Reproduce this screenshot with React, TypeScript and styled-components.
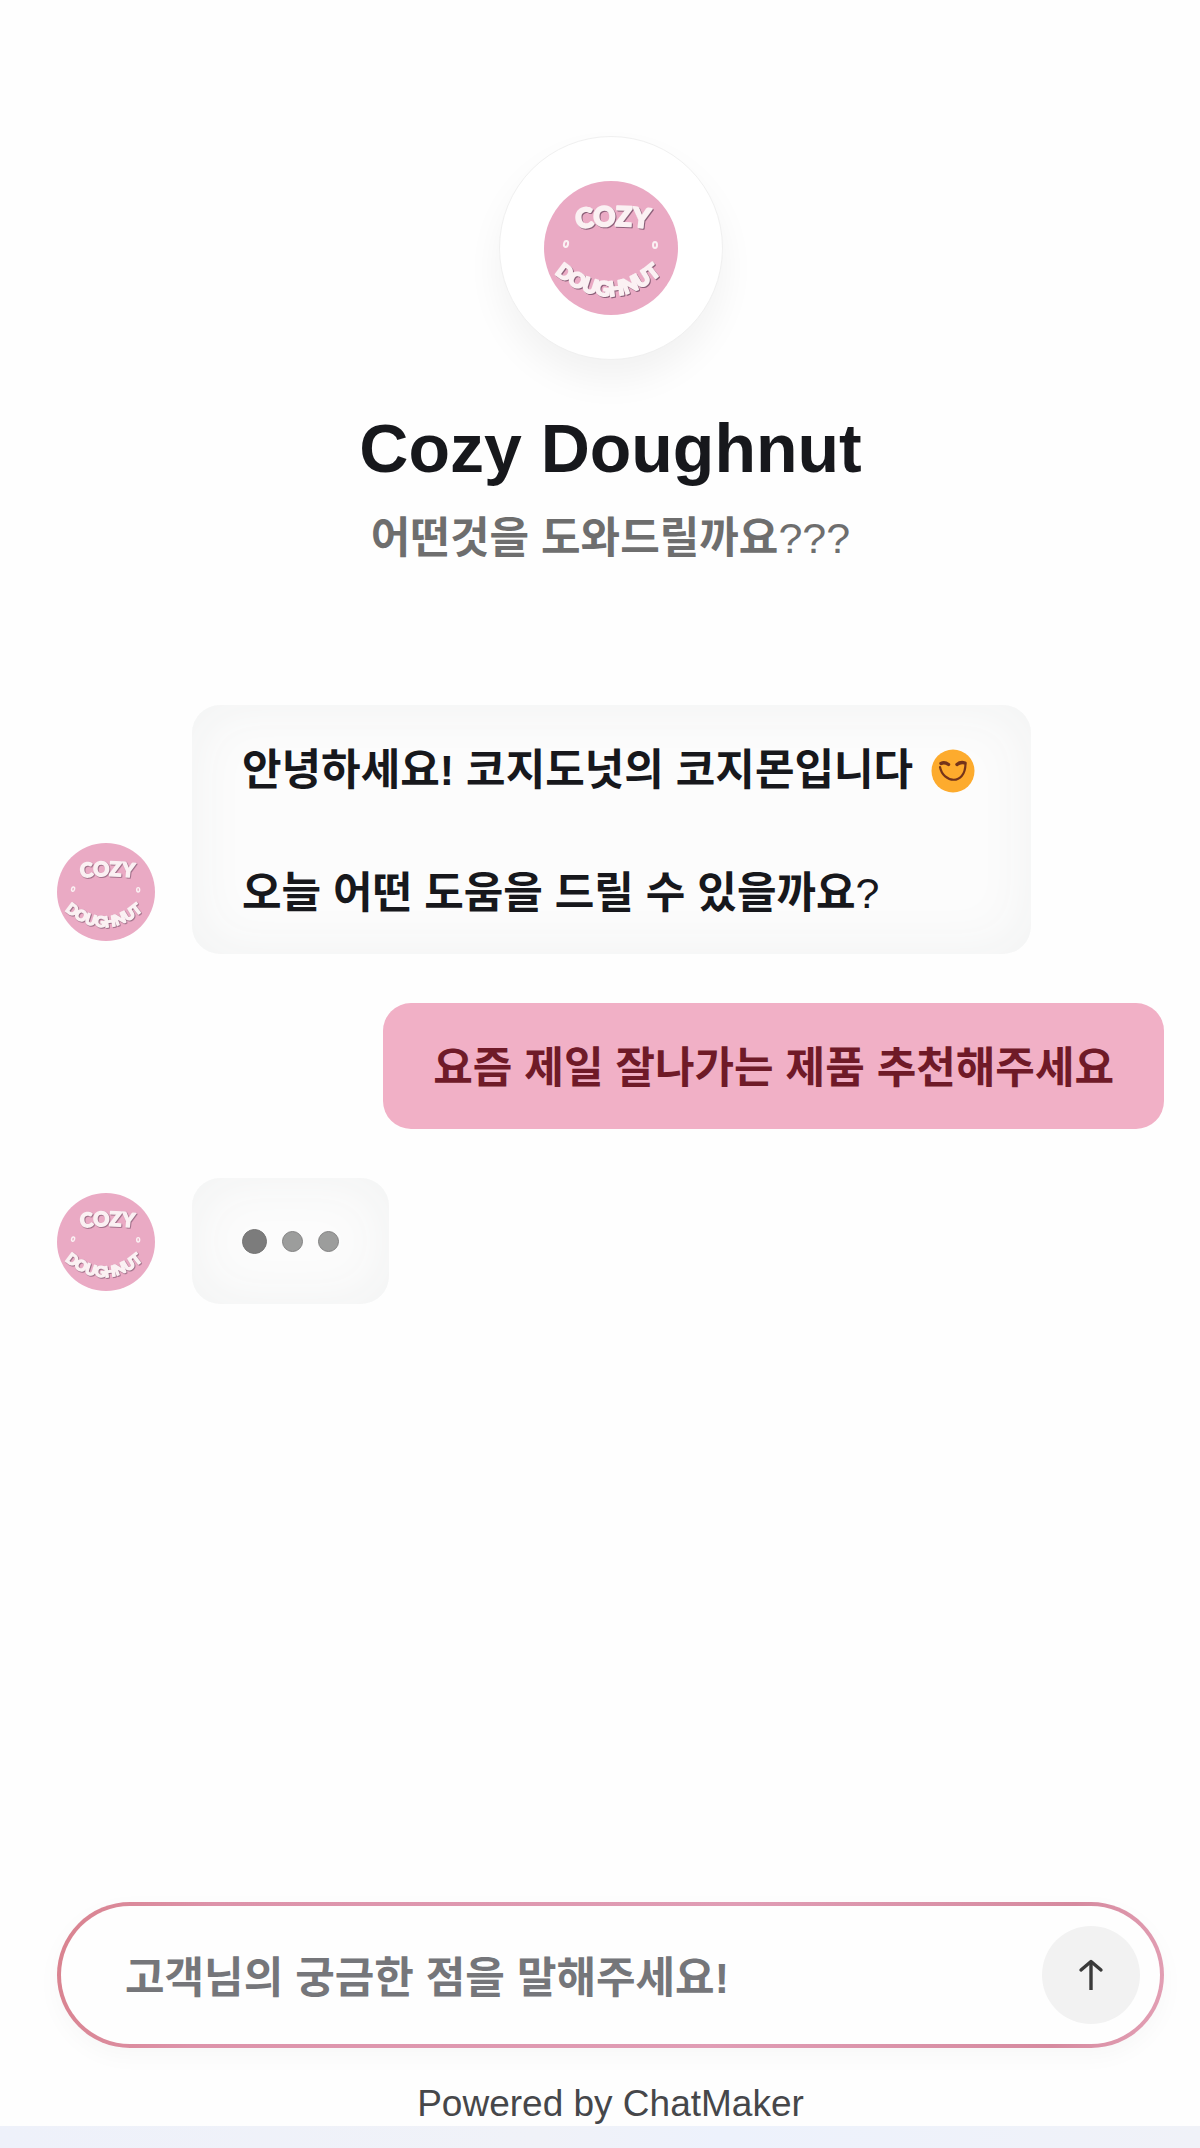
import React, { useId, useState } from "react";
import styled, { createGlobalStyle, css } from "styled-components";

const GlobalStyle = createGlobalStyle`
  *, *::before, *::after { box-sizing: border-box; }
  body {
    margin: 0;
    background: #fefefe;
    color: #17181c;
    font-family: "Liberation Sans", "Noto Sans CJK KR", sans-serif;
  }
  h1, p { margin: 0; }
`;

const Page = styled.div`
  display: flex;
  flex-direction: column;
  min-height: 100vh;
`;

const Main = styled.main`
  flex: 1;
  display: flex;
  flex-direction: column;
  padding: 136px 36px 0 57px;
`;

const Header = styled.header`
  display: flex;
  flex-direction: column;
  align-items: center;
  text-align: center;
`;

const LogoRing = styled.div`
  display: grid;
  place-items: center;
  width: 224px;
  height: 224px;
  border: 1px solid #f0f0f0;
  border-radius: 50%;
  background: #ffffff;
  box-shadow: 0 20px 36px rgba(0, 0, 0, 0.05);
`;

const LogoSvg = styled.svg<{ $size: number }>`
  display: block;
  flex: none;
  width: ${(p) => p.$size}px;
  height: ${(p) => p.$size}px;
`;

const LogoText = styled.text<{ $size: number }>`
  font-family: Lato, "Liberation Sans", sans-serif;
  font-size: ${(p) => p.$size}px;
  font-weight: 900;
  fill: #fbf1f3;
  stroke: #fbf1f3;
  stroke-width: 2;
  stroke-linejoin: round;
  filter: drop-shadow(1px 1px 0 #8a5f78);
`;

const Title = styled.h1`
  margin-top: 48px;
  font-size: 68px;
  font-weight: 700;
  line-height: 80px;
`;

const bodyText = css`
  font-size: 43px;
  font-weight: 700;
  line-height: 62px;
`;

const Subtitle = styled.p`
  ${bodyText}
  margin-top: 19px;
  color: #6e6e6e;
`;

const Light = styled.span`
  font-weight: 400;
`;

const Thread = styled.section`
  display: flex;
  flex-direction: column;
  gap: 49px;
  margin: 136px 0 49px;
`;

const MessageRow = styled.div<{ $mine?: boolean }>`
  display: flex;
  align-items: flex-end;
  justify-content: ${(p) => (p.$mine ? "flex-end" : "flex-start")};
  gap: 37px;
`;

const AvatarSlot = styled.div`
  flex: none;
  padding-bottom: 13px;
`;

const Bubble = styled.div<{ $mine?: boolean }>`
  ${bodyText}
  display: flex;
  flex-direction: column;
  gap: 61px;
  padding: 34px 50px 30px;
  border-radius: 28px;
  ${(p) =>
    p.$mine
      ? css`
          background: #f1b0c6;
          color: #6f1a28;
        `
      : css`
          background: #fcfcfc;
          box-shadow: inset 0 0 60px #f1f2f2;
          color: #17181c;
        `}
`;

const EmojiSvg = styled.svg`
  width: 44px;
  height: 44px;
  margin: 0 6px;
  vertical-align: -8px;
`;

const Typing = styled.div`
  display: flex;
  align-items: center;
  gap: 15px;
  height: 62px;
  padding-bottom: 4px;
`;

const Dot = styled.span<{ $active?: boolean }>`
  width: ${(p) => (p.$active ? 25 : 21)}px;
  height: ${(p) => (p.$active ? 25 : 21)}px;
  border: 1px solid ${(p) => (p.$active ? "#757575" : "#828282")};
  border-radius: 50%;
  background: ${(p) => (p.$active ? "#7c7c7c" : "#9c9d9c")};
`;

const Composer = styled.form`
  display: flex;
  align-items: center;
  height: 146px;
  margin-top: auto;
  padding: 0 20px 0 64px;
  border: 4px solid transparent;
  border-radius: 73px;
  background:
    linear-gradient(#fefefe, #fefefe) padding-box,
    linear-gradient(100deg, #d9828e 0%, #dd93aa 14%, #e09db5 60%, #d68a9f 90%, #e3a0b5 100%) border-box;
  box-shadow: 0 8px 24px rgba(0, 0, 0, 0.03);
`;

const Field = styled.input`
  ${bodyText}
  flex: 1;
  min-width: 0;
  padding: 6px 0 0;
  border: 0;
  outline: 0;
  background: transparent;
  color: #17181c;
  font-family: inherit;

  &::placeholder {
    color: #75767a;
    opacity: 1;
  }
`;

const SendButton = styled.button`
  display: grid;
  place-items: center;
  flex: none;
  width: 98px;
  height: 98px;
  padding: 0;
  border: 0;
  border-radius: 50%;
  background: #f2f2f2;
  color: #3a3a3a;
  cursor: pointer;
`;

const Credit = styled.p`
  margin-top: 34px;
  color: #46474a;
  font-size: 37px;
  line-height: 44px;
  text-align: center;
`;

const BottomBar = styled.footer`
  height: 22px;
  background: linear-gradient(90deg, #eef1fa, #f0f2f8 45%, #edf2fc 60%, #f0f2f8);
`;

function Logo({ size }: { size: number }) {
  const id = useId();
  return (
    <LogoSvg $size={size} viewBox="0 0 134 134" role="img" aria-label="Cozy Doughnut">
      <defs>
        <path id={`${id}-top`} d="M18 50 Q69 40 120 50" />
        <path id={`${id}-bottom`} d="M8 90 Q65 140 120 90" />
      </defs>
      <circle cx="67" cy="67" r="67" fill="#eaaac4" />
      <LogoText $size={27} textAnchor="middle">
        <textPath href={`#${id}-top`} startOffset="50%">COZY</textPath>
      </LogoText>
      <g fill="#eaaac4" stroke="#fbf1f3" strokeWidth="2">
        <ellipse cx="22" cy="63" rx="2" ry="3" transform="rotate(14 22 63)" />
        <ellipse cx="111" cy="64" rx="2" ry="3" />
      </g>
      <LogoText $size={20} textAnchor="middle">
        <textPath href={`#${id}-bottom`} startOffset="50%">DOUGHNUT</textPath>
      </LogoText>
    </LogoSvg>
  );
}

function SmileEmoji() {
  return (
    <EmojiSvg viewBox="0 0 44 44" role="img" aria-label="😊">
      <circle cx="22" cy="22" r="21.5" fill="#fdab2d" />
      <g fill="none" stroke="#74341a" strokeLinecap="round" strokeLinejoin="round">
        <path d="M10 14.5 Q13.5 12.500 17.5 15.500" strokeWidth="3.4" />
        <path d="M26 15.500 Q29.5 12.500 34 14" strokeWidth="3.4" />
        <path d="M9 18 C12 34 34 37 34.500 15" strokeWidth="2.200" />
      </g>
    </EmojiSvg>
  );
}

function ArrowUp() {
  return (
    <svg width="26" height="32" viewBox="0 0 26 32" fill="none" stroke="currentColor" strokeWidth="3.4" strokeLinejoin="round" aria-hidden="true">
      <path d="M13 31 V3" />
      <path d="M3 11 L13 2.500 L23 11" strokeLinecap="round" />
    </svg>
  );
}

export default function App() {
  const [draft, setDraft] = useState("");
  return (
    <>
      <GlobalStyle />
      <Page>
        <Main>
          <Header>
            <LogoRing>
              <Logo size={134} />
            </LogoRing>
            <Title>Cozy Doughnut</Title>
            <Subtitle>
              어떤것을 도와드릴까요<Light>???</Light>
            </Subtitle>
          </Header>

          <Thread aria-label="대화">
            <MessageRow>
              <AvatarSlot>
                <Logo size={98} />
              </AvatarSlot>
              <Bubble>
                <p>
                  안녕하세요! 코지도넛의 코지몬입니다 <SmileEmoji />
                </p>
                <p>
                  오늘 어떤 도움을 드릴 수 있을까요<Light>?</Light>
                </p>
              </Bubble>
            </MessageRow>
            <MessageRow $mine>
              <Bubble $mine>
                <p>요즘 제일 잘나가는 제품 추천해주세요</p>
              </Bubble>
            </MessageRow>
            <MessageRow>
              <AvatarSlot>
                <Logo size={98} />
              </AvatarSlot>
              <Bubble>
                <Typing role="status" aria-label="입력 중">
                  <Dot $active />
                  <Dot />
                  <Dot />
                </Typing>
              </Bubble>
            </MessageRow>
          </Thread>

          <Composer onSubmit={(e) => { e.preventDefault(); setDraft(""); }}>
            <Field
              type="text"
              aria-label="메시지"
              placeholder="고객님의 궁금한 점을 말해주세요!"
              value={draft}
              onChange={(e) => setDraft(e.target.value)}
            />
            <SendButton type="submit" aria-label="보내기">
              <ArrowUp />
            </SendButton>
          </Composer>
          <Credit>Powered by ChatMaker</Credit>
        </Main>
        <BottomBar />
      </Page>
    </>
  );
}
